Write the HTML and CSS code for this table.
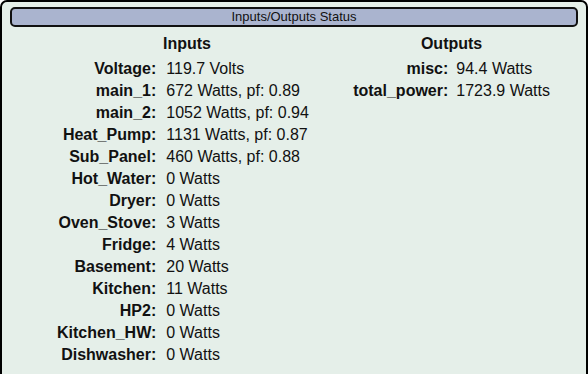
FILE: index.html
```html
<!DOCTYPE html>
<html>
<head>
<meta charset="utf-8">
<link rel="stylesheet" href="styles.css">
</head>
<body>
<div class="panel">
  <div class="title">Inputs/Outputs Status</div>
  <div class="columns">
    <table class="tbl inputs">
      <tr><th colspan="2">Inputs</th></tr>
      <tr><td class="lbl">Voltage:</td><td class="val">119.7 Volts</td></tr>
      <tr><td class="lbl">main_1:</td><td class="val">672 Watts, pf: 0.89</td></tr>
      <tr><td class="lbl">main_2:</td><td class="val">1052 Watts, pf: 0.94</td></tr>
      <tr><td class="lbl">Heat_Pump:</td><td class="val">1131 Watts, pf: 0.87</td></tr>
      <tr><td class="lbl">Sub_Panel:</td><td class="val">460 Watts, pf: 0.88</td></tr>
      <tr><td class="lbl">Hot_Water:</td><td class="val">0 Watts</td></tr>
      <tr><td class="lbl">Dryer:</td><td class="val">0 Watts</td></tr>
      <tr><td class="lbl">Oven_Stove:</td><td class="val">3 Watts</td></tr>
      <tr><td class="lbl">Fridge:</td><td class="val">4 Watts</td></tr>
      <tr><td class="lbl">Basement:</td><td class="val">20 Watts</td></tr>
      <tr><td class="lbl">Kitchen:</td><td class="val">11 Watts</td></tr>
      <tr><td class="lbl">HP2:</td><td class="val">0 Watts</td></tr>
      <tr><td class="lbl">Kitchen_HW:</td><td class="val">0 Watts</td></tr>
      <tr><td class="lbl">Dishwasher:</td><td class="val">0 Watts</td></tr>
    </table>
    <table class="tbl outputs">
      <tr><th colspan="2">Outputs</th></tr>
      <tr><td class="lbl">misc:</td><td class="val">94.4 Watts</td></tr>
      <tr><td class="lbl">total_power:</td><td class="val">1723.9 Watts</td></tr>
    </table>
  </div>
</div>
</body>
</html>
```

FILE: styles.css
```css
html, body {
  margin: 0;
  padding: 0;
  background: #ffffff;
}
body {
  font-family: "Liberation Sans", Arial, sans-serif;
  color: #111;
}
.panel {
  border: 2px solid #000;
  border-radius: 7px;
  background: #e5efe9;
  padding: 5px 8px 30px 8px;
}
.title {
  border: 2px solid #111;
  border-radius: 5px;
  background: #aab4cf;
  height: 16px;
  line-height: 16px;
  font-size: 13px;
  text-align: center;
  color: #111;
}
.columns {
  display: flex;
  align-items: flex-start;
  margin-top: 6px;
}
.tbl {
  border-collapse: collapse;
  font-size: 16px;
}
.tbl th {
  font-weight: bold;
  text-align: center;
  height: 25px;
  line-height: 22px;
  padding: 0;
  vertical-align: top;
}
.tbl td {
  height: 22px;
  line-height: 22px;
  padding: 0 5px;
  white-space: nowrap;
}
.tbl .lbl {
  text-align: right;
  font-weight: bold;
}
.tbl .val {
  text-align: left;
}
.inputs {
  margin-left: 42px;
}
.inputs .val {
  padding-right: 13px;
}
.outputs {
  margin-left: auto;
  margin-right: 23px;
}
.outputs .val {
  padding-left: 3px;
}
```
